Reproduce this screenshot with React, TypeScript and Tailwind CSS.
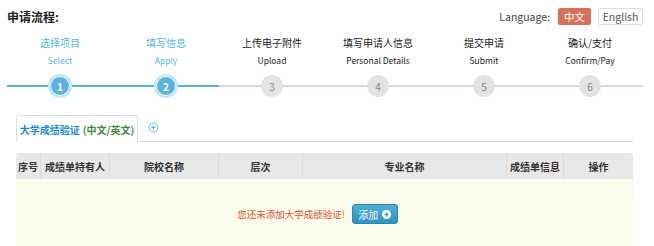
import React from 'react';

const steps = [
  { cn: '选择项目', en: 'Select', done: true },
  { cn: '填写信息', en: 'Apply', done: true },
  { cn: '上传电子附件', en: 'Upload', done: false },
  { cn: '填写申请人信息', en: 'Personal Details', done: false },
  { cn: '提交申请', en: 'Submit', done: false },
  { cn: '确认/支付', en: 'Confirm/Pay', done: false },
];

const cols = [
  { label: '序号', w: 'w-[25px]' },
  { label: '成绩单持有人', w: 'w-[69px]' },
  { label: '院校名称', w: 'w-[109px]' },
  { label: '层次', w: 'w-[84px]' },
  { label: '专业名称', w: 'w-[204px]' },
  { label: '成绩单信息', w: 'w-[57px]' },
  { label: '操作', w: 'flex-1' },
];

const font = { fontFamily: '"Noto Sans CJK SC", "Noto Sans", sans-serif' };

export default function App() {
  return (
    <div className="w-[654px] h-[246px] bg-white overflow-hidden text-[#333]" style={font}>
      {/* header row */}
      <div className="flex items-center justify-between pl-[7px] pr-[11px] pt-[7px] h-[26px]">
        <div className="text-[12px] font-bold text-[#222]">申请流程:</div>
        <div className="flex items-center text-[10.5px]">
          <span className="text-[#444] mr-[8px]">Language:</span>
          <span className="bg-[#d9705a] text-white w-[33px] text-center h-[17px] leading-[17px] rounded-[2px]">中文</span>
          <span className="ml-[7px] border border-[#ddd] text-[#555] w-[45px] text-center h-[17px] leading-[15px] rounded-[2px]">English</span>
        </div>
      </div>

      {/* steps */}
      <div className="flex pl-[7px] pr-[11px] pt-[10px]">
        {steps.map((s, i) => (
          <div key={i} className="flex-1 flex flex-col items-center">
            <div className={`text-[10px] leading-[14px] ${s.done ? 'text-[#5ab4e0]' : 'text-[#222]'}`}>{s.cn}</div>
            <div className={`text-[8.5px] leading-[12px] mt-[4px] ${s.done ? 'text-[#5ab4e0]' : 'text-[#222]'}`}>{s.en}</div>
            <div className="relative w-full h-[26px] mt-[7px] flex items-center justify-center">
              <div className={`absolute left-0 right-0 top-[12px] h-[2px] ${s.done ? 'bg-[#5ab4e0]' : 'bg-[#d3d9ec]'}`} />
              {s.done ? (
                <div className="relative w-[24px] h-[24px] rounded-full bg-[#5ab4e0] border-2 border-[#c7e7f6] flex items-center justify-center">
                  <div className="w-[20px] h-[20px] rounded-full border border-white bg-[#5ab4e0] flex items-center justify-center text-white text-[10px] font-bold">
                    {i + 1}
                  </div>
                </div>
              ) : (
                <div className="relative w-[22px] h-[22px] rounded-full bg-[#e3e3e3] flex items-center justify-center text-[#888] text-[10px]">
                  {i + 1}
                </div>
              )}
            </div>
          </div>
        ))}
      </div>

      {/* tabs */}
      <div className="mx-[16px] mt-[16px] w-[617px] flex items-end border-b border-[#ddd] h-[27px]">
        <div className="w-[122px] h-[27px] border border-b-0 border-[#ddd] rounded-t-[3px] bg-white flex items-center justify-center text-[10px] font-bold -mb-px">
          <span className="text-[#1a8ad0]">大学成绩验证</span>
          <span className="text-[#3c8c3c] ml-[3px]">(中文/英文)</span>
        </div>
        <div className="h-[27px] flex items-center ml-[10px]">
          <svg width="11" height="11" viewBox="0 0 12 12">
            <circle cx="6" cy="6" r="5" fill="none" stroke="#5ab4e0" strokeWidth="1" />
            <path d="M6 3.5v5M3.5 6h5" stroke="#5ab4e0" strokeWidth="1.2" />
          </svg>
        </div>
      </div>

      {/* table */}
      <div className="mx-[16px] mt-[11px] w-[617px] rounded-t-[3px] overflow-hidden">
        <div className="flex h-[26px] bg-[#e8e8e8] text-[10px] font-bold text-[#333]">
          {cols.map((c, i) => (
            <div
              key={i}
              className={`${c.w} flex items-center justify-center ${i < cols.length - 1 ? 'border-r border-[#dcdcdc]' : ''}`}
            >
              {c.label}
            </div>
          ))}
        </div>
        <div className="h-[70px] bg-[#fbfbec] flex items-center justify-center pr-[14px]">
          <span className="text-[9.5px] text-[#e0502a]">您还未添加大学成绩验证!</span>
          <button className="ml-[7px] w-[46px] h-[20px] rounded-[3px] bg-gradient-to-b from-[#4bb0d6] to-[#2f94bf] border border-[#2a88b0] text-white text-[10px] flex items-center justify-center">
            添加
            <span className="ml-[4px] w-[9px] h-[9px] rounded-full bg-white flex items-center justify-center">
              <svg width="7" height="7" viewBox="0 0 7 7">
                <path d="M3.5 1.5v4M1.5 3.5h4" stroke="#3aa0c8" strokeWidth="1.3" />
              </svg>
            </span>
          </button>
        </div>
      </div>
    </div>
  );
}
